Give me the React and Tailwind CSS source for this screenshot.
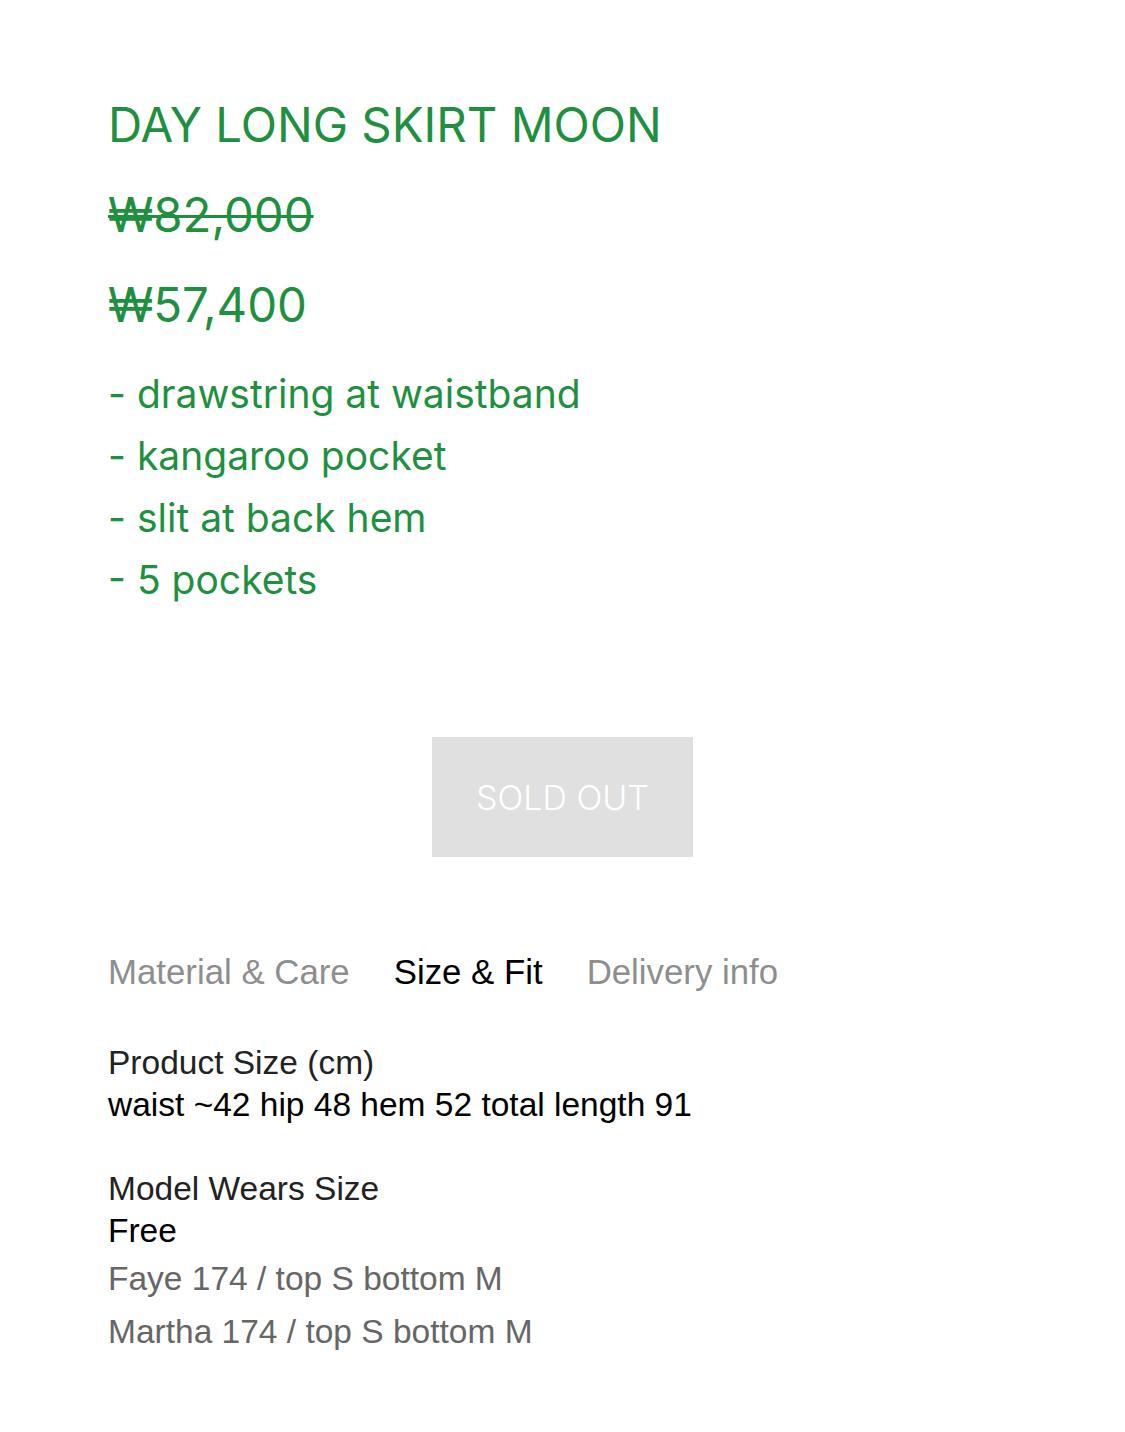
import React from 'react'

const bullets = ['drawstring at waistband', 'kangaroo pocket', 'slit at back hem', '5 pockets']

const App = () => {
    return (
        <div className="min-h-[1432px] bg-white px-[108px] pt-[96px]">
            <div className="text-[#1e9040]" style={{ fontFamily: 'Inter, sans-serif' }}>
                <h1 className="text-[47.4px] leading-[58px]">DAY LONG SKIRT MOON</h1>
                <p className="mt-[32px] text-[47.4px] leading-[58px] line-through decoration-[3px]">₩82,000</p>
                <p className="mt-[32px] text-[47.4px] leading-[58px]">₩57,400</p>
            </div>

            <ul className="mt-[29px] text-[#1e9040] text-[39px] leading-[62px]" style={{ fontFamily: 'Inter, sans-serif' }}>
                {bullets.map((b, i) => <li key={i}>- {b}</li>)}
            </ul>

            <div className="flex justify-center mt-[126px]">
                <button className="w-[261px] h-[120px] bg-[#e0e0e0] text-white text-[34px] font-light" style={{ fontFamily: 'Inter, sans-serif' }}>
                    SOLD OUT
                </button>
            </div>

            <div style={{ fontFamily: '"Liberation Sans", Arial, sans-serif' }}>
                <div className="flex gap-[44px] mt-[95px] text-[34.8px] leading-[40px]">
                    <span className="text-[#8e8e8e]">Material &amp; Care</span>
                    <span className="text-black">Size &amp; Fit</span>
                    <span className="text-[#8e8e8e]">Delivery info</span>
                </div>

                <div className="mt-[50px] text-[33.5px] leading-[42px] text-[#222]">
                    <p>Product Size (cm)</p>
                    <p className="text-black">waist ~42 hip 48 hem 52 total length 91</p>
                </div>

                <div className="mt-[42px] text-[33.5px] leading-[42px]">
                    <p className="text-[#222]">Model Wears Size</p>
                    <p className="text-black">Free</p>
                    <p className="text-[#666] leading-[53px]">Faye 174 / top S bottom M</p>
                    <p className="text-[#666] leading-[53px]">Martha 174 / top S bottom M</p>
                </div>
            </div>
        </div>
    )
}

export default App
